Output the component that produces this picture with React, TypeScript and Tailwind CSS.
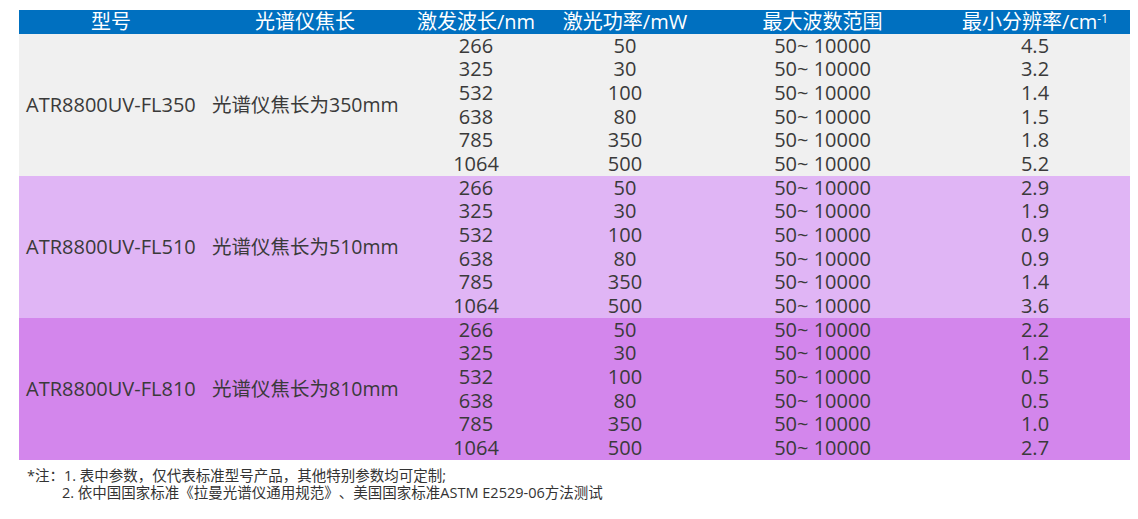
import { Fragment } from "react";

const groups = [
  { model: "ATR8800UV-FL350", focal: "光谱仪焦长为350mm", bg: "bg-[#f0f0f0]", res: ["4.5", "3.2", "1.4", "1.5", "1.8", "5.2"] },
  { model: "ATR8800UV-FL510", focal: "光谱仪焦长为510mm", bg: "bg-[#e0b5f5]", res: ["2.9", "1.9", "0.9", "0.9", "1.4", "3.6"] },
  { model: "ATR8800UV-FL810", focal: "光谱仪焦长为810mm", bg: "bg-[#d386ec]", res: ["2.2", "1.2", "0.5", "0.5", "1.0", "2.7"] },
];

const lasers = [
  ["266", "50"],
  ["325", "30"],
  ["532", "100"],
  ["638", "80"],
  ["785", "350"],
  ["1064", "500"],
];

const cols = "grid grid-cols-[184px_204px_138px_160px_235px_190px]";

export default function App() {
  return (
    <div className="min-h-[519px] w-[1138px] bg-white pt-[10px] font-['Open_Sans','Noto_Sans_CJK_SC',sans-serif] text-[#3a3a3a]">
      <div className="ml-[19px] w-[1111px]">
        <div className={`${cols} h-[24px] items-center bg-[#0070c0] text-[20px] leading-[24px] text-white`}>
          <div className="text-center">型号</div>
          <div className="text-center">光谱仪焦长</div>
          <div className="text-center">激发波长/nm</div>
          <div className="text-center">激光功率/mW</div>
          <div className="text-center">最大波数范围</div>
          <div className="text-center">
            最小分辨率/cm<sup className="text-[12px]">-1</sup>
          </div>
        </div>
        {groups.map((g) => (
          <div key={g.model} className={`${cols} ${g.bg} h-[142px] grid-rows-6 text-[20px] leading-[22px]`}>
            <div className="row-span-6 flex items-center pl-[7px]">{g.model}</div>
            <div className="row-span-6 flex items-center pl-[9px] text-[19.5px]">{g.focal}</div>
            {lasers.map(([wl, pw], i) => (
              <Fragment key={wl}>
                <div className="flex items-center justify-center">{wl}</div>
                <div className="flex items-center justify-center">{pw}</div>
                <div className="flex items-center justify-center">50~ 10000</div>
                <div className="flex items-center justify-center">{g.res[i]}</div>
              </Fragment>
            ))}
          </div>
        ))}
      </div>
      <div className="mt-[7px] pl-[27px] text-[14.5px] leading-[17px] text-[#333] [text-spacing-trim:space-all]">
        <div>*注：1. 表中参数，仅代表标准型号产品，其他特别参数均可定制;</div>
        <div className="pl-[35px]">2. 依中国国家标准《拉曼光谱仪通用规范》、美国国家标准ASTM E2529-06方法测试</div>
      </div>
    </div>
  );
}
